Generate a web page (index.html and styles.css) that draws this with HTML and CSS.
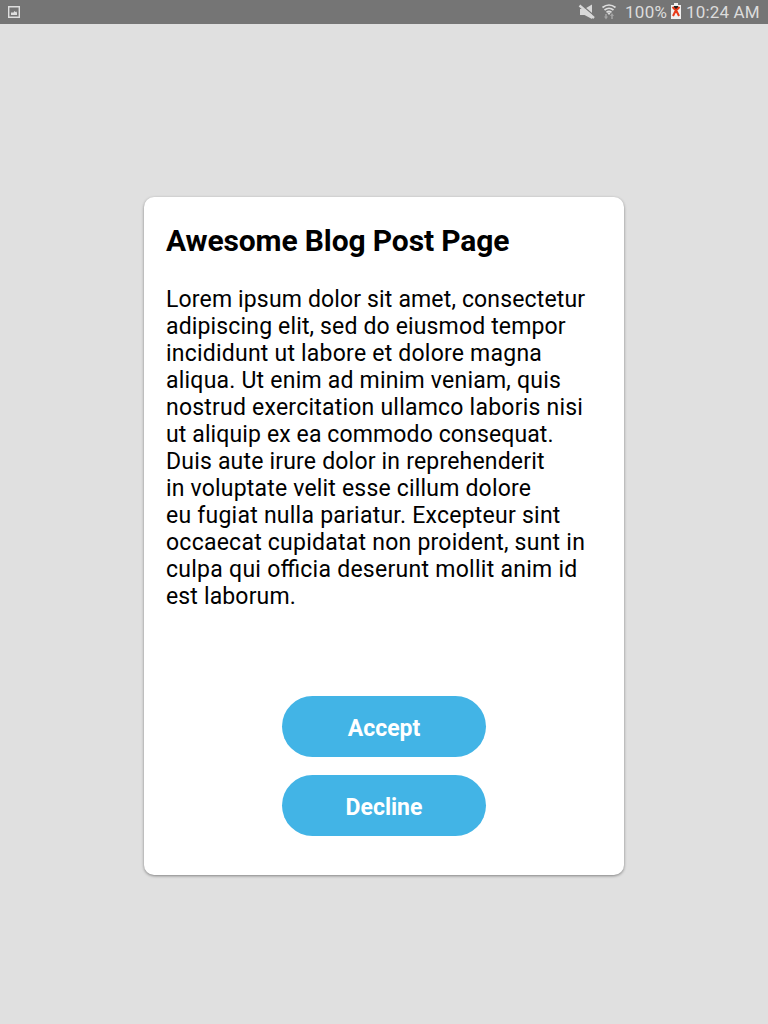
FILE: index.html
```html
<!DOCTYPE html>
<html lang="en">
<head>
<meta charset="utf-8">
<title>Awesome Blog Post Page</title>
<link rel="stylesheet" href="styles.css">
</head>
<body>
<header class="status">
  <svg class="shot" width="12" height="12" viewBox="0 0 12 12"><path d="M.7.7h10.600v10.600H.7z" fill="none" stroke="#dedede" stroke-width="1.400"/><path d="M3 9V7l1-1 1 1 1.500-2 1 1L8.500 5.500 9 7v2z" fill="#dedede"/></svg>
  <div class="right">
    <svg class="mute" width="18" height="18" viewBox="0 0 18 18"><path d="M3 6h4.500L15 1.500v14.500L7.500 12H3z" fill="#d8d8d8"/><path d="m4 1.500 14 12" stroke="#757575" stroke-width="1.600"/><path d="m2.500 2.500 14.500 12.500" stroke="#d8d8d8" stroke-width="2.400"/></svg>
    <svg class="wifi" width="16" height="18" viewBox="0 0 16 18"><path d="M1.500 4.500q6.500-5 13 0M3.500 7q4.500-3.500 9 0M5.500 9.300q2.500-2 5 0" fill="none" stroke="#ddd" stroke-width="1.700"/><path d="m6.500 10.200 1.500-1 1.500 1L8 12z" fill="#ddd"/><path d="M3 13.500h1.200V11h1.600v2.500H7L5 16.500zM9 13l2-3 2 3h-1.200v3h-1.600v-3z" fill="#a4a4a4"/></svg>
    <span class="pct">100%</span>
    <svg class="battery" width="10" height="16" viewBox="0 0 10 16"><path d="M0 2h3V0h4v2h3v14H0z" fill="#f0f0f0"/><path d="M3 3h4v4H3z" fill="#222"/><path d="m1.500 4 3.500 3.500L8.500 4M5 7l-3 6M5 7l3 6M3.500 9h3" stroke="#e83a18" stroke-width="2" fill="none"/></svg>
    <span class="time">10:24 AM</span>
  </div>
</header>
<main class="stage">
  <article class="card">
    <h1>Awesome Blog Post Page</h1>
    <p>
      <span class="line snug">Lorem ipsum dolor sit amet, consectetur</span>
      <span class="line snug">adipiscing elit, sed do eiusmod tempor</span>
      <span class="line open">incididunt ut labore et dolore magna</span>
      <span class="line open">aliqua. Ut enim ad minim veniam, quis</span>
      <span class="line open">nostrud exercitation ullamco laboris nisi</span>
      <span class="line tight">ut aliquip ex ea commodo consequat.</span>
      <span class="line">Duis aute irure dolor in reprehenderit</span>
      <span class="line">in voluptate velit esse cillum dolore</span>
      <span class="line wide">eu fugiat nulla pariatur. Excepteur sint</span>
      <span class="line wide">occaecat cupidatat non proident, sunt in</span>
      <span class="line widest">culpa qui o<span class="lig">ffi</span>cia deserunt mollit anim id</span>
      <span class="line snug">est laborum.</span>
    </p>
    <div class="actions"><button>Accept</button><button>Decline</button></div>
  </article>
</main>
</body>
</html>
```

FILE: styles.css
```css
* { box-sizing: border-box; }
body { margin: 0; height: 1024px; background: #e0e0e0; font-family: Roboto, sans-serif; color: #000; overflow: hidden; }
.status { height: 24px; background: #757575; display: flex; align-items: center; justify-content: space-between; padding: 0 8px; color: #dcdcdc; font-size: 17px; line-height: 24px; }
.right { display: flex; align-items: center; white-space: nowrap; }
.mute { margin-right: 6px; }
.wifi { margin-right: 8px; }
.pct { width: 46px; letter-spacing: .3px; }
.battery { margin: -2px 5px 0 0; }
.time { width: 74px; letter-spacing: .15px; }
.stage { padding-top: 173px; display: flex; justify-content: center; }
.card { width: 480px; height: 678px; background: #fff; border-radius: 10px; padding: 26px 22px 0; box-shadow: 0 1px 3px rgba(0,0,0,.42); }
h1 { margin: 0; font-size: 30px; line-height: 36px; font-weight: 700; white-space: nowrap; letter-spacing: -.13px; }
p { margin: 27px 0 0; font-size: 23px; line-height: 27px; white-space: nowrap; }
.line { display: block; letter-spacing: .19px; }
.tight { letter-spacing: .12px; }
.snug { letter-spacing: .15px; }
.open { letter-spacing: .22px; }
.wide { letter-spacing: .24px; }
.widest { letter-spacing: .27px; }
.lig { letter-spacing: 0; }
.actions { margin-top: 86px; display: flex; flex-direction: column; align-items: center; gap: 18px; }
button { width: 204px; height: 61px; border: 0; border-radius: 31px; background: #42b4e6; color: #fff; font: 700 23px/27px Roboto, sans-serif; padding: 4px 0 0; }
```
